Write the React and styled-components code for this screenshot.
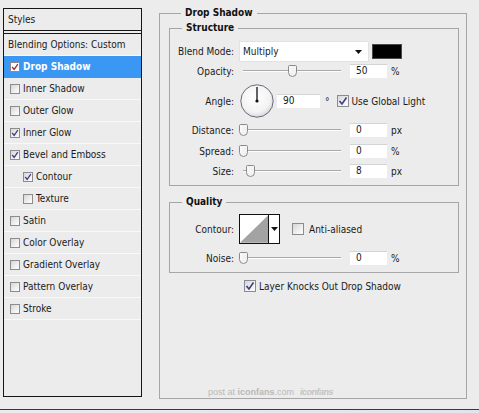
import React from 'react';
import styled, { createGlobalStyle } from 'styled-components';

const GlobalStyle = createGlobalStyle`
  html, body { margin: 0; padding: 0; background: #ececec; }
  body {
    font-family: "DejaVu Sans Condensed", "DejaVu Sans", "Liberation Sans", sans-serif;
    font-stretch: condensed;
    font-size: 10px;
    color: #1a1a1a;
  }
  #root { width: 479px; height: 413px; overflow: hidden; }
`;

const Page = styled.div`
  width: 479px;
  height: 413px;
  display: flex;
  flex-direction: column;
  background: #ececec;
`;

const Main = styled.div`
  height: 409px;
  display: flex;
  align-items: flex-start;
  padding-left: 3px;
  box-sizing: border-box;
`;

const BottomEdge = styled.div`
  flex: 1;
  border-top: 1px solid #3a3a3a;
  background: linear-gradient(90deg, #efe9ee, #e4e2f0);
`;

/* ---------- left styles list ---------- */
const StylesPanel = styled.div`
  margin-top: 8px;
  width: 139px;
  height: 389px;
  box-sizing: border-box;
  border: 1px solid #161616;
  background: #ececec;
  display: flex;
  flex-direction: column;
`;

const PanelHeader = styled.div`
  height: 21px;
  line-height: 21px;
  padding-left: 4px;
  border-bottom: 1px solid #161616;
  margin-bottom: 2px;
`;

const StyleList = styled.div`
  flex: 1;
  border-top: 1px solid #161616;
`;

const StyleRow = styled.div`
  height: 21px;
  display: flex;
  align-items: center;
  gap: 3px;
  padding-left: ${p => p.$pl}px;
  border-bottom: 1px solid ${p => (p.$selected ? '#3a98f4' : '#f9f9f9')};
  background: ${p => (p.$selected ? '#3a98f4' : 'transparent')};
  color: ${p => (p.$selected ? '#ffffff' : '#1a1a1a')};
  font-weight: ${p => (p.$selected ? 'bold' : 'normal')};
  white-space: nowrap;
`;

/* ---------- checkbox ---------- */
const Box = styled.span`
  width: ${p => p.$size}px;
  height: ${p => p.$size}px;
  box-sizing: border-box;
  flex-shrink: 0;
  border: 1px solid #8c8c8c;
  background: ${p =>
    p.$white ? '#ffffff' : 'linear-gradient(135deg, #d6d6d6 0%, #f4f4f4 70%, #fbfbfb 100%)'};
  display: inline-flex;
  align-items: center;
  justify-content: center;
  margin-left: ${p => p.$ml || 0}px;
`;

const CheckBox = ({ checked, size = 10, white, ml, checkColor = '#3b3f86' }) => (
  <Box $size={size} $white={white} $ml={ml}>
    {checked && (
      <svg width={size - 2} height={size - 2} viewBox="0 0 10 10">
        <path d="M1.5 5 L4 8 L8.5 1.5" fill="none" stroke={checkColor} strokeWidth="1.6" />
      </svg>
    )}
  </Box>
);

/* ---------- right group boxes ---------- */
const Group = styled.fieldset`
  margin: ${p => p.$mt || 0}px 0 0 0;
  padding: ${p => p.$pt || 0}px ${p => p.$pr || 0}px ${p => p.$pb || 0}px ${p => p.$pl || 0}px;
  border: 1px solid #a6a6a6;
  box-sizing: border-box;
  width: ${p => p.$w}px;
  min-width: 0;
  display: flex;
  flex-direction: column;
`;

const OuterGroup = styled(Group)`
  height: 392px;
  margin-left: 17px;
  margin-top: 7px;
`;

const Legend = styled.legend`
  margin-left: ${p => p.$ml}px;
  padding: 0 4px;
  font-weight: bold;
  line-height: 12px;
  color: #111;
`;

const Row = styled.div`
  display: flex;
  align-items: center;
  height: ${p => p.$h}px;
  margin-top: ${p => p.$mt || 0}px;
  margin-left: ${p => p.$ml || 0}px;
  white-space: nowrap;
`;

const Label = styled.span`
  width: 64px;
  margin-right: 5px;
  text-align: right;
  flex-shrink: 0;
`;

const Select = styled.div`
  width: 130px;
  height: 21px;
  box-sizing: border-box;
  background: #ffffff;
  border: 1px solid #e2e2e2;
  display: flex;
  align-items: center;
  justify-content: space-between;
  padding: 0 6px 0 3px;
`;

const Swatch = styled.div`
  width: 30px;
  height: 15px;
  margin-left: 3px;
  box-sizing: border-box;
  background: #000;
  border: 1px solid #4a4a4a;
`;

const SliderWrap = styled.div`
  position: relative;
  width: 104px;
  height: 14px;
  display: flex;
  align-items: center;
`;

const Track = styled.div`
  flex: 1;
  margin: 0 2px 0 4px;
  border-top: 1px solid #a9a9a9;
  border-bottom: 1px solid #fdfdfd;
`;

const Thumb = styled.svg`
  position: absolute;
  top: 1px;
`;

const Slider = ({ pos }) => (
  <SliderWrap>
    <Track />
    <Thumb width="9" height="12" viewBox="0 0 9 12" style={{ left: `${4 + pos * 98 - 4.5}px` }}>
      <path d="M1.5 0.5 H7.5 Q8.5 0.5 8.5 1.5 V7.5 Q8.5 11.5 4.5 11.5 Q0.5 11.5 0.5 7.5 V1.5 Q0.5 0.5 1.5 0.5 Z"
        fill="#f3f3f3" stroke="#8a8a8a" />
      <path d="M2 2 V8" stroke="#ffffff" />
    </Thumb>
  </SliderWrap>
);

const NumInput = styled.div`
  width: ${p => p.$w}px;
  height: 14px;
  line-height: 14px;
  margin-left: ${p => p.$ml}px;
  background: #ffffff;
  box-shadow: inset 0 1px 0 #d4d4d4;
  padding-left: 6px;
  box-sizing: border-box;
`;

const Unit = styled.span`
  margin-left: ${p => p.$ml || 4}px;
`;

const Dial = styled.svg`
  margin-left: 1px;
  flex-shrink: 0;
`;

const ContourSwatch = styled.div`
  width: 41px;
  height: 30px;
  box-sizing: border-box;
  border: 1px solid #111;
  display: flex;
  background: #fff;
`;

const ContourArrow = styled.div`
  width: 10px;
  border-left: 1px solid #111;
  display: flex;
  align-items: center;
  justify-content: center;
`;

const TextGap = styled.span`
  margin-left: ${p => p.$ml}px;
`;

const Watermark = styled.div`
  margin-top: auto;
  margin-left: 39px;
  line-height: 11px;
  font-size: 9px;
  color: #b9b9b9;
  font-family: "Liberation Sans", sans-serif;
  white-space: nowrap;
`;

const WmBold = styled.b`
  font-weight: bold;
`;

const WmLogo = styled.i`
  margin-left: 6px;
  font-weight: bold;
  color: #c4c4c4;
  letter-spacing: -0.5px;
`;

const DownArrow = () => (
  <svg width="7" height="4" viewBox="0 0 7 4">
    <path d="M0 0 H7 L3.5 4 Z" fill="#111" />
  </svg>
);

const styleItems = [
  { label: 'Drop Shadow', checked: true, selected: true },
  { label: 'Inner Shadow' },
  { label: 'Outer Glow' },
  { label: 'Inner Glow', checked: true },
  { label: 'Bevel and Emboss', checked: true },
  { label: 'Contour', checked: true, nested: true },
  { label: 'Texture', nested: true },
  { label: 'Satin' },
  { label: 'Color Overlay' },
  { label: 'Gradient Overlay' },
  { label: 'Pattern Overlay' },
  { label: 'Stroke' },
];

export default function App() {
  return (
    <Page>
      <GlobalStyle />
      <Main>
        <StylesPanel>
          <PanelHeader>Styles</PanelHeader>
          <StyleList>
            <StyleRow $pl={4}>Blending Options: Custom</StyleRow>
            {styleItems.map(it => (
              <StyleRow key={it.label} $pl={it.nested ? 19 : 6} $selected={it.selected}>
                <CheckBox
                  checked={it.checked}
                  white={it.selected}
                  checkColor={it.selected ? '#9a2a3a' : '#3b3f86'}
                />
                {it.label}
              </StyleRow>
            ))}
          </StyleList>
        </StylesPanel>

        <OuterGroup $w={308} $pl={9} $pr={7}>
          <Legend $ml={12}>Drop Shadow</Legend>

          <Group $w={290} $mt={3} $pt={7} $pb={7}>
            <Legend $ml={12}>Structure</Legend>
            <Row $h={21}>
              <Label>Blend Mode:</Label>
              <Select>
                <span>Multiply</span>
                <DownArrow />
              </Select>
              <Swatch />
            </Row>
            <Row $h={14} $mt={2}>
              <Label>Opacity:</Label>
              <Slider pos={0.5} />
              <NumInput $w={37} $ml={7}>50</NumInput>
              <Unit>%</Unit>
            </Row>
            <Row $h={34} $mt={6}>
              <Label>Angle:</Label>
              <Dial width="34" height="34" viewBox="0 0 34 34">
                <defs>
                  <radialGradient id="dialFill" cx="0.45" cy="0.4" r="0.6">
                    <stop offset="0" stopColor="#ffffff" />
                    <stop offset="0.75" stopColor="#f3f3f3" />
                    <stop offset="1" stopColor="#d8d8de" />
                  </radialGradient>
                </defs>
                <circle cx="17" cy="17" r="16.2" fill="url(#dialFill)" stroke="#6b6b78" strokeWidth="1" />
                <line x1="17" y1="17" x2="17" y2="3" stroke="#111" strokeWidth="1.3" />
                <circle cx="17" cy="17" r="1.6" fill="#111" />
              </Dial>
              <NumInput $w={43} $ml={3}>90</NumInput>
              <Unit $ml={5}>°</Unit>
              <CheckBox checked size={12} ml={7} />
              <TextGap $ml={3}>Use Global Light</TextGap>
            </Row>
            <Row $h={14} $mt={5}>
              <Label>Distance:</Label>
              <Slider pos={0} />
              <NumInput $w={37} $ml={7}>0</NumInput>
              <Unit>px</Unit>
            </Row>
            <Row $h={14} $mt={7}>
              <Label>Spread:</Label>
              <Slider pos={0} />
              <NumInput $w={37} $ml={7}>0</NumInput>
              <Unit>%</Unit>
            </Row>
            <Row $h={14} $mt={6}>
              <Label>Size:</Label>
              <Slider pos={0.08} />
              <NumInput $w={37} $ml={7}>8</NumInput>
              <Unit>px</Unit>
            </Row>
          </Group>

          <Group $w={290} $mt={10} $pt={6} $pb={7}>
            <Legend $ml={12}>Quality</Legend>
            <Row $h={30}>
              <Label>Contour:</Label>
              <ContourSwatch>
                <svg width="29" height="28" viewBox="0 0 29 28">
                  <path d="M0 28 L29 0 L29 28 Z" fill="#a3a3a3" />
                </svg>
                <ContourArrow>
                  <DownArrow />
                </ContourArrow>
              </ContourSwatch>
              <CheckBox size={12} ml={12} />
              <TextGap $ml={5}>Anti-aliased</TextGap>
            </Row>
            <Row $h={14} $mt={7}>
              <Label>Noise:</Label>
              <Slider pos={0} />
              <NumInput $w={37} $ml={7}>0</NumInput>
              <Unit>%</Unit>
            </Row>
          </Group>

          <Row $h={12} $mt={7} $ml={75}>
            <CheckBox checked size={12} />
            <TextGap $ml={3}>Layer Knocks Out Drop Shadow</TextGap>
          </Row>

          <Watermark>
            post at <WmBold>iconfans</WmBold>.com<WmLogo>iconfans</WmLogo>
          </Watermark>
        </OuterGroup>
      </Main>
      <BottomEdge />
    </Page>
  );
}
